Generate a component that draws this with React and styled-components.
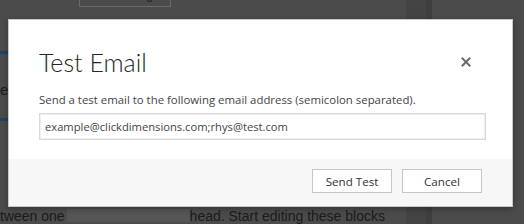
import React, { useState } from "react";
import styled, { createGlobalStyle } from "styled-components";

const GlobalStyle = createGlobalStyle`
  html, body {
    margin: 0;
    padding: 0;
    background: #4b4b4b;
  }
  * {
    box-sizing: border-box;
  }
`;

const Page = styled.div`
  position: relative;
  width: 524px;
  height: 224px;
  overflow: hidden;
  display: grid;
  grid-template-columns: 406px 20px 6px 1fr;
  background: #4b4b4b;
  font-family: "Liberation Sans", Arial, sans-serif;
`;

const Editor = styled.div`
  display: flex;
  flex-direction: column;
`;

const Band = styled.div`
  background: ${(p) => p.color};
`;

const SelectImage = styled.div`
  margin: -14px 0 0 79px;
  width: 92px;
  height: 21px;
  border: 1px solid #6a6a6a;
  color: #1c1c1c;
  font-size: 12px;
  text-align: center;
  line-height: 17px;
`;

const BlueRule = styled.div`
  width: 40px;
  height: 3px;
  background: #1d4563;
  margin-top: ${(p) => p.top}px;
`;

const Fragment = styled.div`
  margin-top: 27px;
  font-size: 15px;
  color: #1c1c1c;
  line-height: 18px;
`;

const BottomLine = styled.div`
  margin-top: auto;
  display: flex;
  align-items: flex-start;
  font-size: 14px;
  line-height: 18px;
  color: #1a1a1a;
  white-space: nowrap;
  height: 19px;
  margin-bottom: -2px;
`;

const Blank = styled.span`
  display: inline-block;
  width: 123px;
  height: 13px;
  margin: 2px 0 0 2px;
  background: #555555;
`;

const Modal = styled.div`
  position: absolute;
  left: 8px;
  top: 19px;
  width: 505px;
  height: 188px;
  background: #ffffff;
  border: 1px solid #c8c8c8;
  box-shadow: 0 2px 6px rgba(0, 0, 0, 0.3);
  display: flex;
  flex-direction: column;
  font-family: "Open Sans", "Noto Sans", sans-serif;
`;

const Header = styled.div`
  display: flex;
  align-items: center;
  justify-content: space-between;
  padding: 22px 41px 0 30px;
  height: 62px;
`;

const Title = styled.h1`
  margin: 0;
  font-family: Lato, "Open Sans", sans-serif;
  font-size: 25px;
  font-weight: 300;
  color: #262626;
`;

const Close = styled.button`
  border: none;
  background: none;
  padding: 0;
  width: 10px;
  height: 10px;
  cursor: pointer;
  display: flex;
`;

const Body = styled.div`
  padding: 10px 26px 0 30px;
  flex: 1;
`;

const Hint = styled.p`
  margin: 0 0 6px;
  font-size: 11.4px;
  color: #444444;
  line-height: 15px;
`;

const EmailInput = styled.input`
  width: 100%;
  height: 27px;
  border: 1px solid #d9d9d9;
  box-shadow: inset 0 0 0 1px #eeeeee;
  padding: 0 5px;
  font-family: "Open Sans", "Noto Sans", sans-serif;
  font-size: 11.2px;
  color: #444444;
  outline: none;
`;

const Footer = styled.div`
  background: #f7f7f7;
  height: 47px;
  display: flex;
  justify-content: flex-end;
  align-items: flex-start;
  gap: 10px;
  padding: 10px 30px 0 0;
`;

const Button = styled.button`
  width: 80px;
  height: 24px;
  background: #ffffff;
  border: 1px solid #c6c6c6;
  font-family: "Open Sans", "Noto Sans", sans-serif;
  font-size: 11.6px;
  color: #333333;
  padding: 0;
  cursor: pointer;
`;

const App = () => {
  const [emails, setEmails] = useState("example@clickdimensions.com;rhys@test.com");

  return (
    <>
      <GlobalStyle />
      <Page>
        <Editor>
          <SelectImage>Select image</SelectImage>
          <BlueRule top={44} />
          <Fragment>el</Fragment>
          <BlueRule top={19} />
          <BottomLine>
            tween one<Blank />head. Start editing these blocks
          </BottomLine>
        </Editor>
        <Band color="#444444" />
        <Band color="#3f3f3f" />
        <Band color="#4b4b4b" />

        <Modal>
          <Header>
            <Title>Test Email</Title>
            <Close aria-label="Close">
              <svg width="10" height="10" viewBox="0 0 10 10">
                <path
                  d="M1.5 1.5 L8.5 8.5 M8.5 1.5 L1.5 8.5"
                  stroke="#6b6b6b"
                  strokeWidth="2"
                  strokeLinecap="square"
                />
              </svg>
            </Close>
          </Header>
          <Body>
            <Hint>
              Send a test email to the following email address (semicolon separated).
            </Hint>
            <EmailInput
              value={emails}
              onChange={(e) => setEmails(e.target.value)}
              type="text"
            />
          </Body>
          <Footer>
            <Button>Send Test</Button>
            <Button>Cancel</Button>
          </Footer>
        </Modal>
      </Page>
    </>
  );
};

export default App;
